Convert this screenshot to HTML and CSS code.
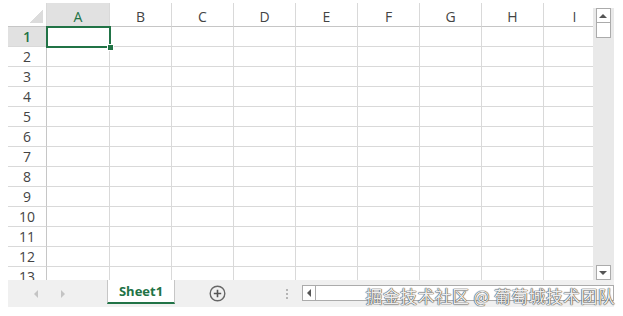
FILE: index.html
```html
<!DOCTYPE html>
<html lang="zh-CN">
<head>
  <meta charset="UTF-8" />
  <meta name="viewport" content="width=device-width, initial-scale=1.0" />
  <title>Sheet1</title>
  <link rel="stylesheet" href="styles.css">
</head>
<body>
  <div class="window">
    <div class="top">
      <div class="sheet" id="sheet"></div>
      <div class="vscroll">
        <div class="vbtn up"><span class="tri-up"></span></div>
        <div class="vthumb"></div>
        <div class="vtrack"></div>
        <div class="vbtn down"><span class="tri-down"></span></div>
      </div>
    </div>

    <div class="tabbar">
      <div class="nav">
        <span class="nav-left"></span>
        <span class="nav-right"></span>
      </div>
      <div class="tab">Sheet1</div>
      <div class="add">
        <svg width="17" height="17" viewBox="0 0 17 17">
          <circle cx="8.5" cy="8.5" r="7.3" fill="none" stroke="#666" stroke-width="1.4"/>
          <path d="M8.5 4.8v7.4M4.8 8.5h7.4" stroke="#555" stroke-width="1.6"/>
        </svg>
      </div>
      <div class="splitter"><i></i><i></i><i></i></div>
      <div class="hscroll">
        <div class="hbtn"><span class="tri-left"></span></div>
        <div class="hthumb"></div>
      </div>
    </div>

    <div class="watermark">掘金技术社区 @ 葡萄城技术团队</div>
  </div>

  <script>
    const sheet = document.getElementById('sheet');
    const cols = ['A', 'B', 'C', 'D', 'E', 'F', 'G', 'H', 'I'];

    // header row
    const corner = document.createElement('div');
    corner.className = 'corner';
    corner.innerHTML = '<span class="corner-tri"></span>';
    sheet.appendChild(corner);
    cols.forEach((c, i) => {
      const h = document.createElement('div');
      h.className = 'col-head' + (i === 0 ? ' active' : '');
      h.textContent = c;
      sheet.appendChild(h);
    });

    // rows
    for (let r = 1; r <= 13; r++) {
      const rh = document.createElement('div');
      rh.className = 'row-head' + (r === 1 ? ' active' : '');
      rh.textContent = r;
      sheet.appendChild(rh);
      cols.forEach((c, i) => {
        const cell = document.createElement('div');
        cell.className = 'cell';
        if (r === 1 && i === 0) {
          cell.className += ' selected';
          cell.innerHTML = '<span class="handle"></span>';
        }
        sheet.appendChild(cell);
      });
    }
  </script>
</body>
</html>
```

FILE: styles.css
```css
body {
  margin: 0;
  background-color: #ffffff;
  font-family: "Open Sans", "Noto Sans", Arial, sans-serif;
}

.window {
  position: relative;
  width: 606px;
  margin: 3px 0 0 8px;
}

.top {
  display: flex;
  height: 277px;
}

/* grid */
.sheet {
  width: 585px;
  overflow: hidden;
  display: grid;
  grid-template-columns: 39px 63px repeat(8, 62px);
  grid-template-rows: 24px;
  grid-auto-rows: 20px;
}
.corner, .col-head, .row-head, .cell {
  box-sizing: border-box;
  border-right: 1px solid #d9d9d9;
  border-bottom: 1px solid #d9d9d9;
}
.corner {
  display: flex;
  justify-content: flex-end;
  align-items: flex-end;
  padding: 0 3px 3px 0;
  border-bottom-color: #c6c6c6;
}
.corner-tri {
  width: 14px;
  height: 14px;
  background: linear-gradient(to top left, #dcdcdc 50%, transparent 50%);
}
.col-head {
  display: flex;
  align-items: center;
  justify-content: center;
  padding-top: 4px;
  font-size: 14px;
  color: #444;
  border-bottom-color: #c6c6c6;
}
.col-head.active {
  background-color: #e1e1e1;
  color: #217346;
}
.row-head {
  display: flex;
  align-items: center;
  justify-content: center;
  font-size: 14px;
  color: #444;
  border-right-color: #c6c6c6;
}
.row-head.active {
  background-color: #e1e1e1;
  color: #217346;
  font-weight: 600;
}
.cell.selected {
  position: relative;
  outline: 2px solid #217346;
  outline-offset: -1px;
}
.handle {
  position: absolute;
  right: -5px;
  bottom: -5px;
  width: 5px;
  height: 5px;
  background-color: #217346;
  border: 1px solid #ffffff;
}

/* vertical scrollbar */
.vscroll {
  width: 21px;
  margin-top: 5px;
  background-color: #e9e9e9;
  display: flex;
  flex-direction: column;
  align-items: center;
  padding-right: 1px;
  box-sizing: border-box;
}
.vbtn, .vthumb {
  box-sizing: border-box;
  width: 15px;
  background-color: #ffffff;
  border: 1px solid #ababab;
  display: flex;
  align-items: center;
  justify-content: center;
}
.vbtn { height: 15px; }
.vthumb {
  height: 15px;
  border-top: none;
}
.vtrack { flex: 1; }
.tri-up {
  border-left: 4px solid transparent;
  border-right: 4px solid transparent;
  border-bottom: 4px solid #555;
}
.tri-down {
  border-left: 4px solid transparent;
  border-right: 4px solid transparent;
  border-top: 4px solid #555;
}

/* sheet tabs */
.tabbar {
  display: flex;
  height: 27px;
  background-color: #f0f0f0;
}
.nav {
  width: 99px;
  display: flex;
  align-items: center;
  padding-left: 26px;
  gap: 23px;
  box-sizing: border-box;
}
.nav-left {
  border-top: 4px solid transparent;
  border-bottom: 4px solid transparent;
  border-right: 4px solid #c4c4c4;
}
.nav-right {
  border-top: 4px solid transparent;
  border-bottom: 4px solid transparent;
  border-left: 4px solid #c4c4c4;
}
.tab {
  width: 68px;
  height: 24px;
  box-sizing: border-box;
  background-color: #ffffff;
  border-left: 1px solid #c6c6c6;
  border-right: 1px solid #c6c6c6;
  border-bottom: 2px solid #217346;
  display: flex;
  align-items: center;
  justify-content: center;
  color: #217346;
  font-size: 13px;
  font-weight: 700;
}
.add {
  margin-left: 34px;
  display: flex;
  align-items: center;
}
.splitter {
  margin-left: 60px;
  display: flex;
  flex-direction: column;
  justify-content: center;
  gap: 2px;
}
.splitter i {
  width: 2px;
  height: 2px;
  background-color: #b5b5b5;
}
.hscroll {
  flex: 1;
  margin: 5px 0 6px 14px;
  display: flex;
  background-color: #ffffff;
  border: 1px solid #ababab;
}
.hbtn {
  width: 12px;
  border-right: 1px solid #ababab;
  display: flex;
  align-items: center;
  justify-content: center;
}
.tri-left {
  border-top: 4px solid transparent;
  border-bottom: 4px solid transparent;
  border-right: 4px solid #555;
}
.hthumb { flex: 1; }

.watermark {
  position: absolute;
  right: -1px;
  bottom: -1px;
  font-family: "Noto Sans CJK SC", sans-serif;
  font-size: 17px;
  letter-spacing: 0.3px;
  color: rgba(255, 255, 255, 0.92);
  text-shadow: 0 0 1px #444, 0 0 1px #444, 0 0 1px #666;
  white-space: nowrap;
}
```
